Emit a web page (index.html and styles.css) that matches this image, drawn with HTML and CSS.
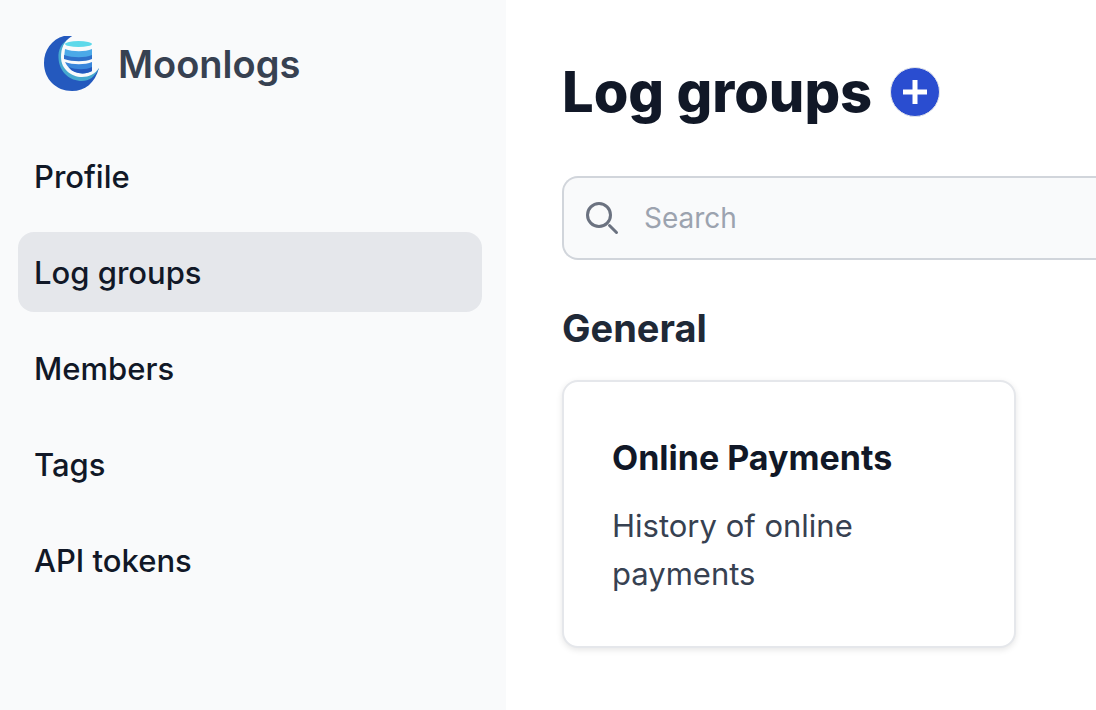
FILE: index.html
```html
<!DOCTYPE html>
<html lang="en">
<head>
<meta charset="utf-8">
<meta name="viewport" content="width=device-width, initial-scale=1">
<title>Moonlogs</title>
<link rel="stylesheet" href="styles.css">
</head>
<body>
<div class="app">
  <aside class="sidebar">
    <a class="brand" href="#">
      <svg class="brand-logo" viewBox="0 1 56 56" aria-hidden="true">
        <path fill="#2459be" d="M30 0C12-1 0 12 0 28C0 44 12 56 28 56C41 56 51 48 55 33L38 38L20 26L21 10Z"/>
        <path fill="#46a9cf" d="M27 3C17 7 14 15 14.500 23C15 37 26 46 38 46C45 46 51 42 55 33L38 36L21 22Z"/>
        <path fill="#f9fafb" d="M30 0C20 5 17 13 17 22C17 34 27 42 38 42C45 42 51 39 55 33V14L38 0Z"/>
        <path fill="#4ba9e8" d="M21 14C29 17 41 17 48 14V23C41 26 29 26 20 23Z"/>
        <path fill="#2e6fca" d="M20 20C29 23 41 23 48 20V24C41 27 29 27 20 24Z"/>
        <path fill="#3a86db" d="M21 27C29 30 41 30 48 27V36C43 39 36 39 31 37C26 35 23 31 21 27Z"/>
        <path fill="#2459be" d="M25 32C32 35 42 35 48 32V36C43 39 36 39 31 37C28 36 26 34 25 32Z"/>
        <ellipse cx="34.500" cy="9" rx="13.500" ry="3" fill="#5ed9ea"/>
      </svg>
      <span class="brand-name">Moonlogs</span>
    </a>
    <nav class="nav" aria-label="Main">
      <a class="nav-link" href="#">Profile</a>
      <a class="nav-link nav-link-active" href="#" aria-current="page">Log groups</a>
      <a class="nav-link" href="#">Members</a>
      <a class="nav-link" href="#">Tags</a>
      <a class="nav-link" href="#">API tokens</a>
    </nav>
  </aside>
  <main class="main">
    <header class="page-header">
      <h1 class="page-title">Log groups</h1>
      <button class="add-button" type="button" aria-label="Add log group">
        <svg class="add-icon" viewBox="0 0 24 24" aria-hidden="true"><path d="M12 0V24M0 12H24" stroke="currentColor" stroke-width="5"/></svg>
      </button>
    </header>
    <div class="search">
      <svg class="search-icon" viewBox="0 0 34 34" aria-hidden="true">
        <circle cx="14" cy="14" r="11.500"/><path d="M24.500 24.500L31.500 31.500" stroke-linecap="round"/>
      </svg>
      <input class="search-input" type="search" placeholder="Search" aria-label="Search">
    </div>
    <section class="group">
      <h2 class="group-title">General</h2>
      <a class="card" href="#">
        <h3 class="card-title">Online Payments</h3>
        <p class="card-text">History of online payments</p>
      </a>
    </section>
  </main>
</div>
</body>
</html>
```
FILE: styles.css
```css
* { box-sizing: border-box; }
body { margin: 0; font-family: Inter, "Liberation Sans", sans-serif; color: #111827; background: #fff; }
a { color: inherit; text-decoration: none; }
h1, h2, h3, p { margin: 0; }

.app { display: flex; min-height: 100vh; }

.sidebar { flex: 0 0 506px; padding: 32px 24px 32px 18px; background: #f9fafb; }
.brand { display: flex; align-items: center; gap: 18px; height: 64px; padding-left: 26px; }
.brand-logo { width: 56px; height: 56px; flex: none; }
.brand-name { font-size: 38px; font-weight: 600; color: #374151; }
.nav { display: flex; flex-direction: column; gap: 16px; margin-top: 40px; }
.nav-link { padding: 17px 16px 15px; border-radius: 16px; font-size: 31px; line-height: 48px; font-weight: 500; }
.nav-link-active { background: #e5e7eb; }

.main { flex: 1; min-width: 0; padding: 56px 0 56px 56px; overflow: hidden; }
.page-header { display: flex; align-items: center; gap: 18px; height: 72px; }
.page-title { font-size: 56px; font-weight: 800; line-height: 72px; white-space: nowrap; color: #111827; }
.add-button { display: grid; place-items: center; flex: none; width: 50px; height: 50px; padding: 0; border: 1px solid #e5e7eb; border-radius: 50%; background: #2a4dd0; color: #fff; }
.add-icon { width: 24px; height: 24px; }

.search { display: flex; align-items: center; gap: 25px; height: 84px; margin-top: 48px; padding-left: 21px; border: 2px solid #d1d5db; border-right: 0; border-radius: 16px 0 0 16px; background: #f9fafb; }
.search-icon { flex: none; width: 34px; height: 34px; fill: none; stroke: #6b7280; stroke-width: 3; }
.search-input { flex: 1; min-width: 0; padding: 0; border: 0; outline: 0; background: transparent; font: inherit; font-size: 28px; line-height: 40px; color: #111827; }
.search-input::placeholder { color: #9ca3af; opacity: 1; }

.group { margin-top: 42px; }
.group-title { font-size: 38px; line-height: 52px; font-weight: 700; color: #1f2937; }
.card { display: block; max-width: 454px; margin-top: 26px; padding: 48px; border: 2px solid #e5e7eb; border-radius: 16px; background: #fff; box-shadow: 0 2px 6px rgba(0, 0, 0, .1); }
.card-title { font-size: 34px; line-height: 56px; font-weight: 700; white-space: nowrap; }
.card-text { margin-top: 16px; font-size: 31px; line-height: 48px; color: #374151; }
```
